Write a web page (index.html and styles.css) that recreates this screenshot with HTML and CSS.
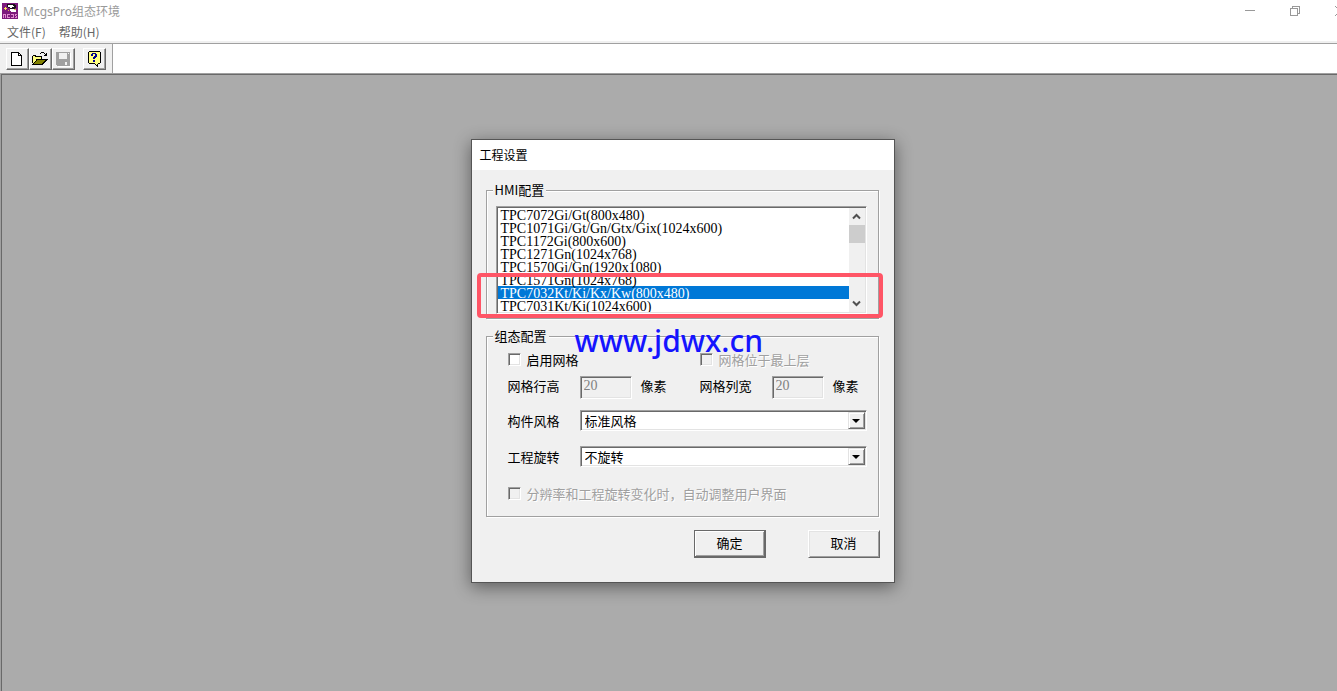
FILE: index.html
```html
<!DOCTYPE html>
<html lang="zh-CN">
<head>
  <meta charset="UTF-8">
  <title>McgsPro组态环境</title>
  <link rel="stylesheet" href="styles.css">
</head>
<body>
  <header class="titlebar">
    <svg class="app-icon" width="16" height="16" viewBox="0 0 16 16" shape-rendering="crispEdges">
      <rect width="16" height="16" fill="#7d1a7d"/>
      <path d="M5 1h8v1h1v3h-1v1H8V5H6V4H5z" fill="#1a1018"/>
      <path d="M6 2h5v1h1v1h-2v1H8V4H6z" fill="#fff"/>
      <path d="M8 6h5v1h1v2H9V8H8z" fill="#fff"/>
      <path d="M3 4h1v1h1v1H4v1H3V6H2V5h1z" fill="#ffe45c"/>
      <path d="M12 6h2v1h-2zM6 7h1v1H6z" fill="#d9c24a"/>
      <path d="M1 11h3v4H3v-3H2v3H1zM5 11h3v1H6v2h2v1H5zM9 11h3v4H9v-1h2v-2H9zM13 11h2v1h-1v1h1v2h-2v-1h1v-1h-1z" fill="#e08ad0"/>
    </svg>
    <span class="app-title">McgsPro组态环境</span>
    <div class="window-buttons">
      <button aria-label="最小化"><svg width="10" height="10" shape-rendering="crispEdges"><path d="M0 4h10v1H0z" fill="#999"/></svg></button>
      <button aria-label="还原"><svg width="10" height="10" shape-rendering="crispEdges"><path d="M0 2h8v8H0zM1 3v6h6V3zM2 0h8v8H8V7h1V1H3v1H2z" fill="#999" fill-rule="evenodd"/></svg></button>
      <button aria-label="关闭"><svg width="10" height="10"><path d="M0 0l10 10M10 0L0 10" stroke="#999"/></svg></button>
    </div>
  </header>

  <nav class="menubar">
    <a href="#">文件(F)</a>
    <a href="#">帮助(H)</a>
  </nav>

  <div class="toolbar">
    <div class="tools">
      <button aria-label="新建">
        <svg width="16" height="16" shape-rendering="crispEdges"><path d="M2 1h8v1h1v1h1v1h1v11H2z" fill="#000"/><path d="M3 2h6v3h3v9H3zM10 3h1v1h-1z" fill="#fff"/></svg>
      </button>
      <button aria-label="打开">
        <svg width="16" height="16" shape-rendering="crispEdges">
          <path d="M1 5h3v1h6v2H5v1H4v1H3v1H2v1H1z" fill="#ffff80"/>
          <path d="M5 9h10l-4 4H1z" fill="#808000"/>
          <path d="M1 4h3v1h6v3H9V6H3V5H1v7H0V5h1zM4 8h12v1h-1v1h-1v1h-1v1h-1v1h-1v1H0v-1h1v-1h1v1h8v-1h1v-1h1v-1h1V9H5v1H4v1H3v1H2v-1h1v-1h1z" fill="#000"/>
          <path d="M9 1h3v1H9zM8 2h1v1H8zM12 2h1v1h-1zM14 2h1v3h-3V4h1V3h1z" fill="#000"/>
        </svg>
      </button>
      <button aria-label="保存" disabled>
        <svg width="16" height="16" shape-rendering="crispEdges"><path d="M2 2h14v14H3v-1H2z" fill="#fff"/><path d="M1 1h14v14H2v-1H1z" fill="#a0a0a0"/><path d="M4 2h8v6H4zM10 11h2v3h-2zM13 2h1v1h-1z" fill="#f0f0f0"/></svg>
      </button>
      <button class="help" aria-label="帮助">
        <svg width="16" height="16" shape-rendering="crispEdges">
          <path d="M3 1h11v11h-2v3h-1v-1h-1v-1H3z" fill="#ffff80"/>
          <path d="M3 0h11v1H3zM2 1h1v11H2zM14 1h1v11h-1zM3 12h6v1H3zM12 12h2v1h-2zM9 13h1v1H9zM10 14h1v1h-1zM11 13h1v3h-1z" fill="#000"/>
          <path d="M6 2h4v1h1v3h-1v1H9v1H7V6h1V5h1V3H7v2H5V3h1zM7 9h2v2H7z" fill="#000090"/>
        </svg>
      </button>
    </div>
  </div>

  <main class="workspace">
    <form class="dialog">
      <h1 class="dialog-title">工程设置</h1>
      <div class="dialog-body">
        <fieldset class="hmi">
          <legend>HMI配置</legend>
          <div class="listbox">
            <select size="8" aria-label="HMI配置">
              <option>TPC7072Gi/Gt(800x480)</option>
              <option>TPC1071Gi/Gt/Gn/Gtx/Gix(1024x600)</option>
              <option>TPC1172Gi(800x600)</option>
              <option>TPC1271Gn(1024x768)</option>
              <option>TPC1570Gi/Gn(1920x1080)</option>
              <option>TPC1571Gn(1024x768)</option>
              <option selected>TPC7032Kt/Ki/Kx/Kw(800x480)</option>
              <option>TPC7031Kt/Ki(1024x600)</option>
            </select>
            <div class="scrollbar">
              <button type="button" aria-label="向上"><svg width="9" height="7"><path d="M1 5.500l3.500-3.500L8 5.500" fill="none" stroke="#505050" stroke-width="2"/></svg></button>
              <span class="thumb"></span>
              <button type="button" class="down" aria-label="向下"><svg width="9" height="7"><path d="M1 1.500L4.500 5 8 1.500" fill="none" stroke="#505050" stroke-width="2"/></svg></button>
            </div>
          </div>
        </fieldset>

        <fieldset class="config">
          <legend>组态配置</legend>
          <div class="row checks">
            <label class="check"><input type="checkbox">启用网格</label>
            <label class="check disabled"><input type="checkbox" disabled>网格位于最上层</label>
          </div>
          <div class="row sizes">
            <label for="rowHeight">网格行高</label>
            <input type="text" id="rowHeight" value="20" disabled>
            <span>像素</span>
            <label for="colWidth">网格列宽</label>
            <input type="text" id="colWidth" value="20" disabled>
            <span>像素</span>
          </div>
          <div class="row choice">
            <label for="style">构件风格</label>
            <div class="combo">
              <select id="style"><option>标准风格</option></select>
              <span class="arrow"></span>
            </div>
          </div>
          <div class="row choice">
            <label for="rotate">工程旋转</label>
            <div class="combo">
              <select id="rotate"><option>不旋转</option></select>
              <span class="arrow"></span>
            </div>
          </div>
          <div class="row">
            <label class="check disabled"><input type="checkbox" disabled>分辨率和工程旋转变化时，自动调整用户界面</label>
          </div>
        </fieldset>

        <div class="actions">
          <button type="button" class="default">确定</button>
          <button type="button">取消</button>
        </div>
      </div>
      <div class="highlight"></div>
      <div class="watermark">www.jdwx.cn</div>
    </form>
  </main>
</body>
</html>
```
FILE: styles.css
```css
* {
  box-sizing: border-box;
}
body {
  margin: 0;
  min-height: 100vh;
  display: flex;
  flex-direction: column;
  overflow: hidden;
  background: #fff;
  font-family: "Noto Sans CJK SC", sans-serif;
  font-size: 12px;
}
button {
  display: flex;
  align-items: center;
  justify-content: center;
  padding: 0;
  border: none;
  background: none;
  font: inherit;
}

/* title bar and menu */
.titlebar {
  display: flex;
  align-items: center;
  height: 22px;
  padding-left: 2px;
  color: #999;
}
.app-title {
  margin-left: 5px;
  font-family: "Noto Sans", "Noto Sans CJK SC", sans-serif;
}
.window-buttons {
  display: flex;
  margin-left: auto;
  margin-right: -25px;
}
.window-buttons button {
  width: 45px;
  height: 20px;
}
.menubar {
  display: flex;
  gap: 13px;
  height: 22px;
  padding-left: 7px;
  line-height: 20px;
  border-bottom: 1px solid #a0a0a0;
  box-shadow: inset 0 -2px #f0f0f0;
}
.menubar a {
  color: #666;
  text-decoration: none;
}

/* toolbar */
.toolbar {
  display: flex;
  height: 29px;
}
.tools {
  display: flex;
  align-items: center;
  padding: 0 6px;
  background: #f0f0f0;
  border-right: 1px solid #a0a0a0;
}
.tools button {
  width: 23px;
  height: 22px;
  padding-right: 2px;
  background: #f0f0f0;
  border: 1px solid;
  border-color: #fff #696969 #696969 #fff;
  box-shadow: inset -1px -1px #a0a0a0;
}
.tools .help {
  margin-left: 8px;
}

/* workspace */
.workspace {
  flex: 1;
  display: flex;
  justify-content: center;
  align-items: flex-start;
  padding: 65px 0 0 27px;
  background: #ababab;
  border: solid #a0a0a0;
  border-width: 1px 0 0 1px;
  box-shadow: inset 1px 1px #696969;
}
.dialog {
  position: relative;
  width: 424px;
  background: #f0f0f0;
  border: 1px solid #555;
  box-shadow: 0 4px 16px rgba(0, 0, 0, 0.45);
}
.dialog-title {
  margin: 0;
  padding-left: 8px;
  background: #fff;
  font-size: 12px;
  font-weight: normal;
  line-height: 30px;
}
.dialog-body {
  padding: 13px 14px 24px;
  font-size: 13px;
}
fieldset {
  min-width: 0;
  margin: 0 1px 0 0;
  border: 1px solid #a0a0a0;
  box-shadow: 1px 1px #fff, inset 1px 1px #fff;
}
legend {
  padding: 0 2px;
  margin-left: -3px;
  background: #f0f0f0;
  line-height: 14px;
}

/* device list */
.hmi {
  padding: 9px 11px 4px 9px;
}
.listbox,
.combo,
.sizes input,
.check input {
  border: 1px solid;
  border-color: #a0a0a0 #fff #fff #a0a0a0;
  box-shadow: inset 1px 1px #696969, inset -1px -1px #e3e3e3;
}
.listbox {
  display: flex;
  height: 108px;
  padding: 1px;
  background: #fff;
}
.listbox select {
  flex: 1;
  height: 104px;
  padding: 0;
  border: none;
  border-radius: 0;
  outline: none;
  overflow: hidden;
  background: #fff;
  font-family: "Liberation Serif", serif;
  font-size: 14px;
}
.listbox option {
  height: 13px;
  min-height: 13px;
  padding: 0 3px;
  line-height: 13px;
  color: #000;
}
.listbox option:checked {
  background: linear-gradient(#0078d7, #0078d7);
  color: #fff;
}
.scrollbar {
  display: flex;
  flex-direction: column;
  width: 16px;
  background: #f0f0f0;
}
.scrollbar button {
  height: 17px;
}
.scrollbar .down {
  margin-top: auto;
}
.thumb {
  height: 18px;
  background: #cdcdcd;
}

/* grid and style settings */
.config {
  margin-top: 10px;
  padding: 6px 11px 13px 21px;
}
.config legend {
  margin-left: -15px;
}
.row {
  display: flex;
  align-items: center;
  min-height: 20px;
}
.check {
  display: flex;
  align-items: center;
  gap: 6px;
}
.check input {
  appearance: none;
  width: 13px;
  height: 13px;
  margin: 0;
  background: #fff;
}
.disabled {
  color: #a0a0a0;
  text-shadow: 1px 1px #fff;
}
.check input:disabled {
  background: #f0f0f0;
}
.checks,
.sizes {
  display: grid;
  grid-template-columns: 192px 1fr;
}
.sizes {
  grid-template-columns: 72px 61px 59px 72px 61px auto;
  align-items: start;
  margin-top: 7px;
  line-height: 20px;
}
.sizes input {
  width: 52px;
  height: 23px;
  padding: 0 3px 3px;
  background: #f0f0f0;
  color: #808080;
  font-family: "Liberation Serif", serif;
  font-size: 14px;
}
.choice {
  margin: 11px 0 15px;
}
.choice + .choice {
  margin-bottom: 16px;
}
.choice label {
  width: 72px;
}
.combo {
  position: relative;
  flex: 1;
  height: 21px;
  padding: 2px;
  background: #fff;
}
.combo select {
  appearance: none;
  display: block;
  width: 100%;
  height: 15px;
  padding: 0 18px 0 2px;
  border: none;
  outline: none;
  background: none;
  color: #000;
  font: inherit;
  line-height: 15px;
}
.arrow {
  position: absolute;
  top: 1px;
  right: 1px;
  bottom: 1px;
  width: 17px;
  display: flex;
  align-items: center;
  justify-content: center;
  background: #f0f0f0;
  border: 1px solid;
  border-color: #e3e3e3 #696969 #696969 #e3e3e3;
  box-shadow: inset 1px 1px #fff, inset -1px -1px #a0a0a0;
  pointer-events: none;
}
.arrow::before {
  content: "";
  border: 4px solid transparent;
  border-top-color: #000;
  border-bottom: none;
}

/* dialog buttons */
.actions {
  display: flex;
  justify-content: flex-end;
  gap: 42px;
  margin-top: 13px;
}
.actions button {
  width: 72px;
  height: 28px;
  padding-bottom: 3px;
  border: 1px solid;
  border-color: #fff #696969 #696969 #fff;
  box-shadow: inset 1px 1px #e3e3e3, inset -1px -1px #a0a0a0;
}
.actions .default {
  border-color: #696969;
  box-shadow: inset -1px -1px #696969, inset 1px 1px #fff, inset -2px -2px #a0a0a0;
}

/* marks over the dialog */
.highlight {
  position: absolute;
  top: 133px;
  left: 5px;
  right: 11px;
  height: 45px;
  border: 4px solid #ff5566;
  border-radius: 4px;
  pointer-events: none;
}
.watermark {
  position: absolute;
  top: 179px;
  left: 103px;
  color: #1414ff;
  font-family: "Noto Sans", sans-serif;
  font-size: 30px;
  font-weight: 500;
  line-height: 44px;
  pointer-events: none;
}
```
